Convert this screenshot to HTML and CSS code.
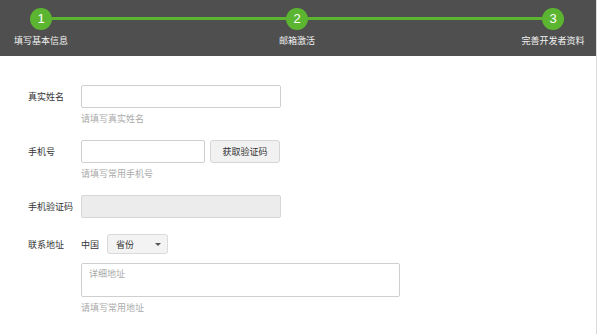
FILE: index.html
```html
<!DOCTYPE html>
<html lang="zh-CN">
<head>
<meta charset="utf-8">
<title>完善开发者资料</title>
<link rel="stylesheet" href="styles.css">
</head>
<body>
<div class="page">
  <header class="steps">
    <div class="step">
      <span class="dot">1</span>
      <span class="step-label">填写基本信息</span>
    </div>
    <div class="bar"></div>
    <div class="step">
      <span class="dot">2</span>
      <span class="step-label">邮箱激活</span>
    </div>
    <div class="bar"></div>
    <div class="step">
      <span class="dot">3</span>
      <span class="step-label">完善开发者资料</span>
    </div>
  </header>

  <form class="form">
    <div class="row">
      <label class="label">真实姓名</label>
      <div class="field">
        <input class="input wide" type="text">
        <div class="hint">请填写真实姓名</div>
      </div>
    </div>

    <div class="row">
      <label class="label">手机号</label>
      <div class="field">
        <div class="inline">
          <input class="input phone" type="text">
          <button type="button" class="btn">获取验证码</button>
        </div>
        <div class="hint">请填写常用手机号</div>
      </div>
    </div>

    <div class="row row-last">
      <label class="label">手机验证码</label>
      <div class="field">
        <input class="input wide disabled" type="text" disabled>
      </div>
    </div>

    <div class="row addr">
      <label class="label">联系地址</label>
      <div class="field">
        <div class="inline country">
          <span class="country-name">中国</span>
          <div class="select"><span>省份</span><span class="caret"></span></div>
        </div>
        <div class="textarea">详细地址</div>
        <div class="hint">请填写常用地址</div>
      </div>
    </div>
  </form>
</div>
</body>
</html>
```

FILE: styles.css
```css
* { box-sizing: border-box; }

html, body {
  margin: 0;
  padding: 0;
  background: #fff;
  font-family: "Noto Sans CJK SC", "Noto Sans", sans-serif;
  font-size: 9px;
  color: #333;
}

.page {
  width: 597px;
  height: 334px;
  border-right: 1px solid #dcdcdc;
  overflow: hidden;
}

.steps {
  height: 56px;
  background: #4f4f4f;
  display: flex;
  align-items: flex-start;
  padding: 8px 0 0 30px;
  width: 596px;
  padding-right: 32px;
}

.step {
  width: 22px;
  display: flex;
  flex-direction: column;
  align-items: center;
}

.dot {
  width: 22px;
  height: 22px;
  border-radius: 50%;
  background: #5cb531;
  color: #fff;
  font-family: "Liberation Sans", Arial, sans-serif;
  font-size: 13px;
  line-height: 22px;
  text-align: center;
}

.step-label {
  white-space: nowrap;
  color: #f2f2f2;
  font-size: 9px;
  line-height: 12px;
  margin-top: 5px;
}

.bar {
  flex: 1;
  height: 3px;
  margin-top: 9px;
  background: #5cb531;
}

.form {
  padding: 29px 0 0 28px;
}

.row {
  display: flex;
  align-items: flex-start;
  margin-bottom: 15px;
}

.row-last { margin-bottom: 16px; }

.label {
  width: 53px;
  flex: none;
  line-height: 23px;
  color: #333;
  white-space: nowrap;
}

.addr .label { line-height: 21px; }

.field {
  display: flex;
  flex-direction: column;
}

.inline {
  display: flex;
  align-items: center;
  gap: 5px;
}

.input {
  height: 23px;
  border: 1px solid #cfcfcf;
  border-radius: 2px;
  background: #fff;
  padding: 0 6px;
  font: inherit;
  outline: none;
}

.wide { width: 200px; }
.phone { width: 124px; }

.disabled {
  background: #ececec;
  border-color: #d6d6d6;
}

.btn {
  width: 70px;
  height: 23px;
  border: 1px solid #d5d5d5;
  border-radius: 3px;
  background: #f1f1f1;
  color: #333;
  font: inherit;
  font-size: 9px;
  padding: 0;
}

.hint {
  margin-top: 4px;
  line-height: 13px;
  color: #aaa;
}

.country { gap: 8px; }

.country-name { color: #333; }

.select {
  width: 61px;
  height: 20px;
  border: 1px solid #dadada;
  border-radius: 3px;
  background: #f3f3f3;
  display: flex;
  align-items: center;
  justify-content: space-between;
  padding: 0 6px 0 8px;
  color: #333;
}

.caret {
  width: 0;
  height: 0;
  border-left: 3px solid transparent;
  border-right: 3px solid transparent;
  border-top: 3px solid #555;
}

.textarea {
  margin-top: 9px;
  width: 319px;
  height: 34px;
  border: 1px solid #cfcfcf;
  border-radius: 2px;
  padding: 4px 7px;
  line-height: 12px;
  color: #aaa;
}
```
